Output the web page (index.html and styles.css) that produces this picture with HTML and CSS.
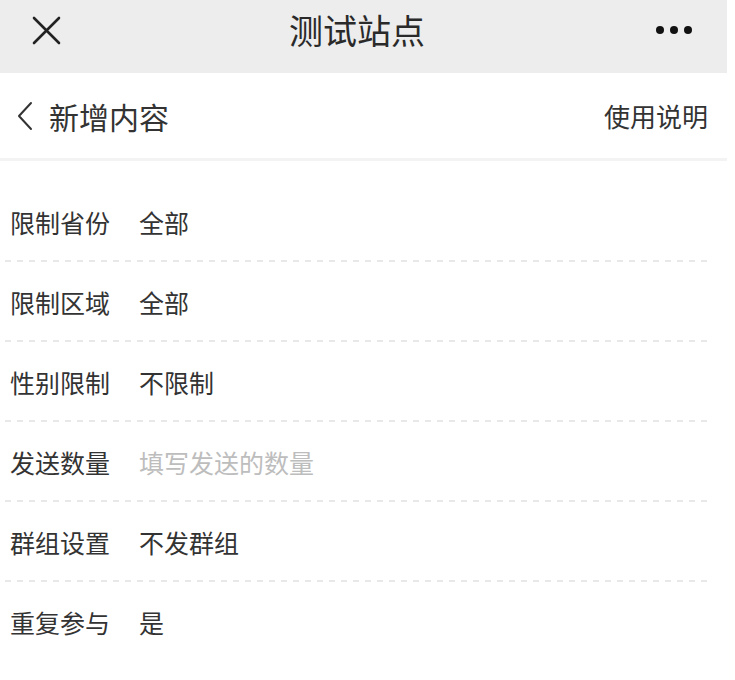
FILE: index.html
```html
<!DOCTYPE html>
<html lang="zh-CN">
<head>
  <meta charset="UTF-8">
  <meta name="viewport" content="width=device-width, initial-scale=1.0">
  <title>测试站点</title>
  <link rel="stylesheet" href="styles.css">
</head>
<body>
  <div class="app">
    <!-- Top navigation bar -->
    <div class="nav-bar">
      <div class="nav-left">
        <svg class="icon-close" width="29" height="29" viewBox="0 0 29 29">
          <path d="M2 2 L27 27 M27 2 L2 27" stroke="#222" stroke-width="2.6" stroke-linecap="round" fill="none"/>
        </svg>
      </div>
      <div class="nav-title">测试站点</div>
      <div class="nav-right">
        <span class="dot"></span><span class="dot"></span><span class="dot"></span>
      </div>
    </div>

    <!-- Page header -->
    <div class="page-head">
      <div class="back">
        <svg class="icon-back" width="16" height="30" viewBox="0 0 16 30">
          <path d="M14 2 L2 15 L14 28" stroke="#333" stroke-width="2" stroke-linecap="round" stroke-linejoin="round" fill="none"/>
        </svg>
        <span class="page-title">新增内容</span>
      </div>
      <a class="help-link">使用说明</a>
    </div>

    <!-- Form rows -->
    <div class="form-list">
      <div class="form-row">
        <span class="label">限制省份</span>
        <span class="value">全部</span>
      </div>
      <div class="form-row">
        <span class="label">限制区域</span>
        <span class="value">全部</span>
      </div>
      <div class="form-row">
        <span class="label">性别限制</span>
        <span class="value">不限制</span>
      </div>
      <div class="form-row">
        <span class="label">发送数量</span>
        <input class="value-input" type="text" placeholder="填写发送的数量">
      </div>
      <div class="form-row">
        <span class="label">群组设置</span>
        <span class="value">不发群组</span>
      </div>
      <div class="form-row last">
        <span class="label">重复参与</span>
        <span class="value">是</span>
      </div>
    </div>
  </div>
</body>
</html>
```

FILE: styles.css
```css
body {
  margin: 0;
  padding: 0;
  background-color: #fff;
  font-family: "Noto Sans CJK SC", "Noto Sans", sans-serif;
  color: #333;
}
.app {
  width: 727px;
}
.nav-bar {
  height: 73px;
  box-sizing: border-box;
  padding-bottom: 13px;
  background-color: #ededed;
  display: flex;
  align-items: center;
}
.nav-left {
  width: 80px;
  box-sizing: border-box;
  padding-left: 32px;
  display: flex;
}
.nav-title {
  flex: 1;
  text-align: center;
  font-size: 34px;
  line-height: 1;
  color: #2a2a2a;
}
.nav-right {
  width: 93px;
  box-sizing: border-box;
  padding-left: 22px;
  display: flex;
  gap: 6px;
}
.dot {
  width: 8px;
  height: 8px;
  border-radius: 50%;
  background-color: #111;
}
.page-head {
  height: 88px;
  box-sizing: border-box;
  padding: 0 19px 0 17px;
  display: flex;
  align-items: center;
  justify-content: space-between;
  border-bottom: 3px solid #f3f3f3;
}
.back {
  display: flex;
  align-items: center;
  gap: 16px;
}
.page-title {
  font-size: 30px;
  line-height: 1;
  color: #333;
}
.help-link {
  font-size: 26px;
  line-height: 1;
  color: #333;
}
.form-list {
  padding: 21px 19px 0 5px;
}
.form-row {
  height: 80px;
  box-sizing: border-box;
  padding-left: 5px;
  display: flex;
  align-items: center;
  font-size: 25px;
  background-image: repeating-linear-gradient(90deg, #e8e8e8 0 6px, transparent 6px 12px);
  background-size: 100% 2px;
  background-repeat: no-repeat;
  background-position: left bottom;
}
.form-row.last {
  background-image: none;
}
.label {
  width: 100px;
  margin-right: 29px;
  color: #333;
}
.value {
  color: #333;
}
.value-input {
  border: none;
  outline: none;
  padding: 0;
  font-family: inherit;
  font-size: 25px;
  color: #333;
  background: transparent;
  width: 400px;
}
.value-input::placeholder {
  color: #bdbdbd;
}
```
